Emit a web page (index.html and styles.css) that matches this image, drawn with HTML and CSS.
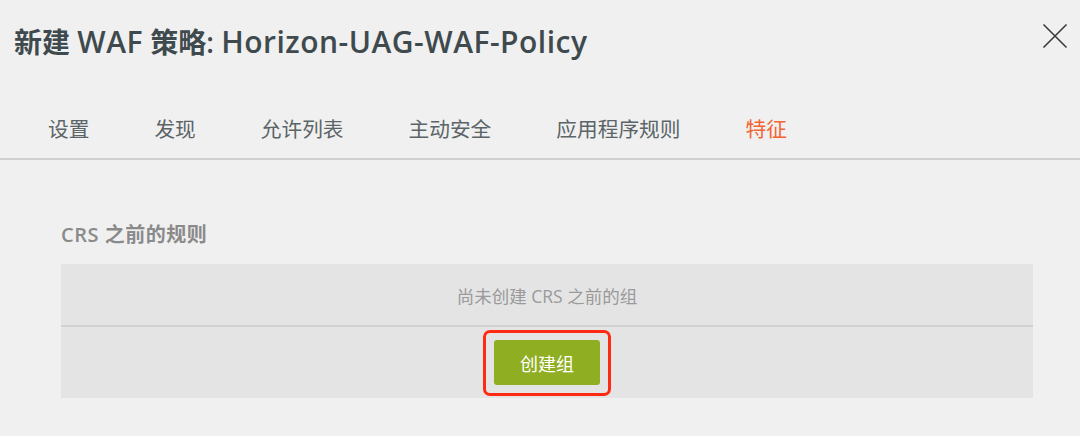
FILE: index.html
```html
<!DOCTYPE html>
<html lang="zh-CN">
<head>
<meta charset="utf-8">
<link rel="stylesheet" href="styles.css">
</head>
<body>
<div class="dialog">
  <header class="head">
    <h1 class="title">新建 <span class="latin">WAF</span> 策略: <span class="latin">Horizon-UAG-WAF-Policy</span></h1>
    <button class="close" aria-label="关闭">
      <svg width="26" height="26" viewBox="0 0 26 26"><path d="M1.5 1.5 L24.5 24.5 M24.5 1.5 L1.5 24.5" stroke="#3a3a3a" stroke-width="1.6" fill="none"/></svg>
    </button>
  </header>
  <nav class="tabs">
    <span class="tab">设置</span>
    <span class="tab">发现</span>
    <span class="tab">允许列表</span>
    <span class="tab">主动安全</span>
    <span class="tab">应用程序规则</span>
    <span class="tab active">特征</span>
  </nav>
  <section class="content">
    <h2 class="section-title">CRS 之前的规则</h2>
    <div class="panel">
      <div class="panel-empty">尚未创建 CRS 之前的组</div>
      <div class="panel-actions">
        <span class="highlight"><button class="btn">创建组</button></span>
      </div>
    </div>
  </section>
</div>
</body>
</html>
```

FILE: styles.css
```css
* { box-sizing: border-box; }
html, body { margin: 0; padding: 0; }
body {
  background: #f0f0f0;
  width: 1080px;
  height: 436px;
  overflow: hidden;
  font-family: "Open Sans", "Noto Sans CJK SC", sans-serif;
}
.dialog { display: flex; flex-direction: column; }
.head {
  display: flex;
  justify-content: space-between;
  align-items: flex-start;
  padding: 22px 12px 0 14px;
  height: 100px;
}
.title {
  margin: 0;
  font-size: 28px;
  font-weight: 600;
  color: #3e4a4e;
  line-height: 40px;
  white-space: nowrap;
}
.latin {
  font-size: 30px;
  letter-spacing: 0.5px;
}
.close {
  border: 0;
  background: none;
  padding: 0;
  margin-top: 1px;
  width: 26px;
  height: 26px;
  cursor: pointer;
}
.tabs {
  display: flex;
  gap: 65px;
  padding: 0 0 0 48px;
  height: 60px;
  align-items: flex-start;
  border-bottom: 2px solid #d0d0d0;
}
.tab {
  font-family: "Noto Sans CJK SC", sans-serif;
  font-size: 20.7px;
  color: #5b6568;
  line-height: 58px;
  margin-top: -1px;
}
.active { color: #f26430; }
.content { padding: 64px 47px 0 61px; }
.section-title {
  margin: 0 0 18px;
  font-size: 20px;
  font-weight: 600;
  color: #8a8a8a;
  line-height: 22px;
  letter-spacing: 0.5px;
}
.panel { background: #e4e4e4; width: 972px; }
.panel-empty {
  height: 63px;
  border-bottom: 2px solid #d2d2d2;
  display: flex;
  align-items: center;
  justify-content: center;
  font-size: 17.5px;
  color: #9a9a9a;
  padding-top: 1px;
}
.panel-actions {
  height: 71px;
  display: flex;
  justify-content: center;
  padding-top: 3px;
}
.highlight {
  display: inline-block;
  border: 3px solid #ff2a14;
  border-radius: 7px;
  padding: 7px 8px 8px 8px;
  height: 66px;
}
.btn {
  width: 106px;
  height: 45px;
  border: 0;
  border-radius: 3px;
  background: #8fae22;
  color: #ffffff;
  font-family: "Noto Sans CJK SC", sans-serif;
  font-size: 18px;
  padding: 0;
}
```
